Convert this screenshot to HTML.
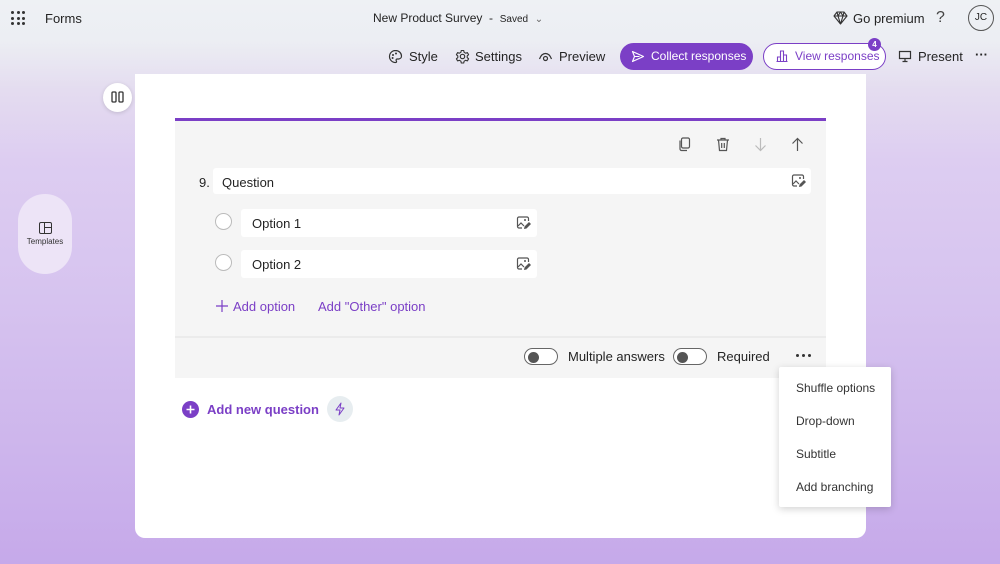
<!DOCTYPE html>
<html><head><style>
*{box-sizing:border-box;margin:0;padding:0}
body{width:1000px;height:564px;overflow:hidden;font-family:"Liberation Sans",sans-serif;color:#242424;position:relative;
background:linear-gradient(180deg,#eef1f4 0px,#eceef3 40px,#e4dcf0 90px,#ddcdf1 160px,#d6c3ef 300px,#cdb5ec 450px,#c6a9ea 564px);}
.a{position:absolute}
.t{font-size:13px}
svg{display:block}
</style></head><body>
<div class="a" style="left:11px;top:11px;width:14px;height:14px;display:grid;grid-template-columns:repeat(3,3px);gap:2.5px">
<i style="width:3px;height:3px;background:#333;border-radius:50%"></i><i style="width:3px;height:3px;background:#333;border-radius:50%"></i><i style="width:3px;height:3px;background:#333;border-radius:50%"></i><i style="width:3px;height:3px;background:#333;border-radius:50%"></i><i style="width:3px;height:3px;background:#333;border-radius:50%"></i><i style="width:3px;height:3px;background:#333;border-radius:50%"></i><i style="width:3px;height:3px;background:#333;border-radius:50%"></i><i style="width:3px;height:3px;background:#333;border-radius:50%"></i><i style="width:3px;height:3px;background:#333;border-radius:50%"></i></div>
<div class="a t" style="left:45px;top:11px">Forms</div>
<div class="a" style="left:373px;top:11px;font-size:12px">New Product Survey &nbsp;- &nbsp;<span style="font-size:10px">Saved</span> &nbsp;<span style="font-size:10px;color:#666">&#8964;</span></div>
<svg class="a" style="left:833px;top:11px" width="15" height="14" viewBox="0 0 15 14"><path d="M4 1h7l3 4-6.5 8L1 5z M1 5h13 M5 5l2.5 8 2.5-8 M4 1l1 4 2.5-4 2.5 4 1-4" fill="none" stroke="#333" stroke-width="1.1" stroke-linejoin="round"/></svg>
<div class="a t" style="left:853px;top:11px">Go premium</div>
<div class="a" style="left:936px;top:9px;font-size:16px;color:#444">?</div>
<div class="a" style="left:968px;top:5px;width:26px;height:26px;border:1px solid #555;border-radius:50%;font-size:10px;text-align:center;line-height:24px">JC</div>
<!-- toolbar -->
<svg class="a" style="left:388px;top:49px" width="15" height="15" viewBox="0 0 15 15"><path d="M7.5 1.5a6 6 0 1 0 0 12c1.2 0 1.3-1 .8-1.7-.6-.8-.2-1.8.9-1.8h1.6a3 3 0 0 0 2.7-3C13.5 4 10.8 1.5 7.5 1.5z" fill="none" stroke="#333" stroke-width="1.2"/><circle cx="5" cy="6" r="1" fill="#333"/><circle cx="8" cy="4.5" r="1" fill="#333"/><circle cx="4.6" cy="9" r="1" fill="#333"/></svg>
<div class="a t" style="left:409px;top:49px">Style</div>
<svg class="a" style="left:455px;top:49px" width="15" height="15" viewBox="0 0 15 15"><circle cx="7.5" cy="7.5" r="2.2" fill="none" stroke="#333" stroke-width="1.2"/><path d="M6.3 1.5h2.4l.4 1.8 1.5.9 1.8-.6 1.2 2.1-1.4 1.2v1.7l1.4 1.2-1.2 2.1-1.8-.6-1.5.9-.4 1.8H6.3l-.4-1.8-1.5-.9-1.8.6-1.2-2.1 1.4-1.2V6.9L1.4 5.7l1.2-2.1 1.8.6 1.5-.9z" fill="none" stroke="#333" stroke-width="1.1" stroke-linejoin="round"/></svg>
<div class="a t" style="left:475px;top:49px">Settings</div>
<svg class="a" style="left:538px;top:51px" width="15" height="11" viewBox="0 0 15 11"><path d="M1.5 8C3 4 5 2.5 7.5 2.5S12 4 13.5 8" fill="none" stroke="#333" stroke-width="1.2"/><circle cx="7.5" cy="7.5" r="2" fill="none" stroke="#333" stroke-width="1.2"/></svg>
<div class="a t" style="left:559px;top:49px">Preview</div>
<div class="a" style="left:620px;top:43px;width:133px;height:27px;background:#7b3fc6;border-radius:14px;color:#fff;font-size:12px;line-height:27px;padding-left:31px">Collect responses</div>
<svg class="a" style="left:631px;top:50px" width="14" height="13" viewBox="0 0 14 13"><path d="M1.5 1.5l11 5-11 5 2-5z M3.5 6.5h5" fill="none" stroke="#fff" stroke-width="1.1" stroke-linejoin="round"/></svg>
<div class="a" style="left:763px;top:43px;width:123px;height:27px;border:1px solid #7b3fc6;border-radius:14px;background:#fff;color:#7b3fc6;font-size:12px;line-height:25px;padding-left:31px">View responses</div>
<svg class="a" style="left:775px;top:49px" width="14" height="14" viewBox="0 0 14 14"><path d="M1.5 12.5h11 M2.5 12.5V8h3v4.5 M5.5 12.5V2h3v10.5 M8.5 12.5V6h3v6.5" fill="none" stroke="#7b3fc6" stroke-width="1.1"/></svg>
<div class="a" style="left:868px;top:38px;width:13px;height:13px;border-radius:50%;background:#7b3fc6;color:#fff;font-size:8px;text-align:center;line-height:13px;font-weight:bold">4</div>
<svg class="a" style="left:898px;top:50px" width="14" height="13" viewBox="0 0 14 13"><path d="M1.5 1.5h11v7h-11z M7 8.5v3 M4.5 11.5h5" fill="none" stroke="#333" stroke-width="1.2"/></svg>
<div class="a t" style="left:918px;top:49px">Present</div>
<div class="a" style="left:975px;top:47px;font-size:13px;font-weight:bold">&middot;&middot;&middot;</div>
<!-- card -->
<div class="a" style="left:135px;top:74px;width:731px;height:464px;background:#fff;border-radius:0 0 10px 10px"></div>
<div class="a" style="left:103px;top:83px;width:29px;height:29px;border-radius:50%;background:#fff;box-shadow:0 1px 4px rgba(0,0,0,.15)"></div>
<svg class="a" style="left:111px;top:91px" width="13" height="12" viewBox="0 0 13 12"><rect x="1" y="1" width="4" height="10" rx="1" fill="none" stroke="#333" stroke-width="1.3"/><rect x="8" y="1" width="4" height="10" rx="1" fill="none" stroke="#333" stroke-width="1.3"/></svg>
<div class="a" style="left:18px;top:194px;width:54px;height:80px;border-radius:27px;background:#ede4f7;text-align:center;padding-top:28px;font-size:8px;color:#333"><div style="width:13px;height:12px;border:1.4px solid #333;border-radius:2px;margin:0 auto 3px;position:relative"><i style="position:absolute;left:4px;top:0;bottom:0;border-left:1.4px solid #333"></i><i style="position:absolute;left:4px;right:0;top:4px;border-top:1.4px solid #333"></i></div>Templates</div>
<!-- question -->
<div class="a" style="left:175px;top:118px;width:651px;height:260px;background:#f5f5f5;border-top:3px solid #7b3fc6"></div>
<div class="a" style="left:175px;top:336px;width:651px;height:2px;background:#ebebeb"></div>
<svg class="a" style="left:678px;top:137px" width="14" height="15" viewBox="0 0 14 15"><rect x="3.5" y="1" width="8" height="10" rx="1.5" fill="none" stroke="#555" stroke-width="1.2"/><path d="M2 3.5v8.5a1.5 1.5 0 0 0 1.5 1.5H9" fill="none" stroke="#555" stroke-width="1.2"/></svg>
<svg class="a" style="left:716px;top:137px" width="14" height="15" viewBox="0 0 14 15"><path d="M1 3h12 M5 3V1.5h4V3 M2.5 3l1 10.5h7l1-10.5 M5.7 6v5 M8.3 6v5" fill="none" stroke="#555" stroke-width="1.2"/></svg>
<svg class="a" style="left:754px;top:137px" width="13" height="15" viewBox="0 0 13 15"><path d="M6.5 1v12 M1.5 8.5l5 5 5-5" fill="none" stroke="#bbb" stroke-width="1.2"/></svg>
<svg class="a" style="left:791px;top:137px" width="13" height="15" viewBox="0 0 13 15"><path d="M6.5 14V2 M1.5 6.5l5-5 5 5" fill="none" stroke="#555" stroke-width="1.2"/></svg>
<div class="a t" style="left:199px;top:175px">9.</div>
<div class="a" style="left:213px;top:168px;width:598px;height:26px;background:#fff;border-radius:3px"></div>
<div class="a t" style="left:222px;top:175px">Question</div>
<svg class="a" style="left:791px;top:173px" width="15" height="15" viewBox="0 0 15 15"><path d="M6 13H3a1.5 1.5 0 0 1-1.5-1.5v-8A1.5 1.5 0 0 1 3 2h8a1.5 1.5 0 0 1 1.5 1.5V6 M2 11l3-3 3 3" fill="none" stroke="#555" stroke-width="1.2"/><circle cx="9" cy="5" r="1" fill="#555"/><path d="M8 14l.5-2.5 4.5-4.5 2 2-4.5 4.5z" fill="#555"/></svg>
<div class="a" style="left:215px;top:213px;width:17px;height:17px;border:1px solid #bbb;border-radius:50%;background:#fff"></div>
<div class="a" style="left:241px;top:209px;width:296px;height:28px;background:#fff;border-radius:3px"></div>
<div class="a t" style="left:252px;top:216px">Option 1</div>
<svg class="a" style="left:516px;top:215px" width="15" height="15" viewBox="0 0 15 15"><path d="M6 13H3a1.5 1.5 0 0 1-1.5-1.5v-8A1.5 1.5 0 0 1 3 2h8a1.5 1.5 0 0 1 1.5 1.5V6 M2 11l3-3 3 3" fill="none" stroke="#555" stroke-width="1.2"/><circle cx="9" cy="5" r="1" fill="#555"/><path d="M8 14l.5-2.5 4.5-4.5 2 2-4.5 4.5z" fill="#555"/></svg>
<div class="a" style="left:215px;top:254px;width:17px;height:17px;border:1px solid #bbb;border-radius:50%;background:#fff"></div>
<div class="a" style="left:241px;top:250px;width:296px;height:28px;background:#fff;border-radius:3px"></div>
<div class="a t" style="left:252px;top:257px">Option 2</div>
<svg class="a" style="left:516px;top:256px" width="15" height="15" viewBox="0 0 15 15"><path d="M6 13H3a1.5 1.5 0 0 1-1.5-1.5v-8A1.5 1.5 0 0 1 3 2h8a1.5 1.5 0 0 1 1.5 1.5V6 M2 11l3-3 3 3" fill="none" stroke="#555" stroke-width="1.2"/><circle cx="9" cy="5" r="1" fill="#555"/><path d="M8 14l.5-2.5 4.5-4.5 2 2-4.5 4.5z" fill="#555"/></svg>
<svg class="a" style="left:215px;top:299px" width="14" height="14" viewBox="0 0 14 14"><path d="M7 1v12 M1 7h12" stroke="#7b3fc6" stroke-width="1.2"/></svg>
<div class="a t" style="left:233px;top:299px;color:#7b3fc6">Add option</div>
<div class="a t" style="left:318px;top:299px;color:#7b3fc6">Add "Other" option</div>
<!-- toggles -->
<div class="a" style="left:524px;top:348px;width:34px;height:17px;border:1px solid #666;border-radius:9px;background:#fff"><i style="position:absolute;left:3px;top:2.5px;width:11px;height:11px;border-radius:50%;background:#555"></i></div>
<div class="a t" style="left:568px;top:349px">Multiple answers</div>
<div class="a" style="left:673px;top:348px;width:34px;height:17px;border:1px solid #666;border-radius:9px;background:#fff"><i style="position:absolute;left:3px;top:2.5px;width:11px;height:11px;border-radius:50%;background:#555"></i></div>
<div class="a t" style="left:717px;top:349px">Required</div>
<div class="a" style="left:796px;top:354px;display:flex;gap:3px"><i style="width:3px;height:3px;border-radius:50%;background:#333"></i><i style="width:3px;height:3px;border-radius:50%;background:#333"></i><i style="width:3px;height:3px;border-radius:50%;background:#333"></i></div>
<!-- menu -->
<div class="a" style="left:779px;top:367px;width:112px;height:140px;background:#fff;box-shadow:0 2px 8px rgba(0,0,0,.18);border-radius:2px;font-size:12px;color:#333">
<div class="a" style="left:17px;top:14px;white-space:nowrap">Shuffle options</div>
<div class="a" style="left:17px;top:47px">Drop-down</div>
<div class="a" style="left:17px;top:80px">Subtitle</div>
<div class="a" style="left:17px;top:113px;white-space:nowrap">Add branching</div>
</div>
<!-- add new -->
<div class="a" style="left:182px;top:401px;width:17px;height:17px;border-radius:50%;background:#7b3fc6"></div>
<svg class="a" style="left:182px;top:401px" width="17" height="17" viewBox="0 0 17 17"><path d="M8.5 4.5v8 M4.5 8.5h8" stroke="#fff" stroke-width="1.6"/></svg>
<div class="a t" style="left:207px;top:402px;color:#7b3fc6;font-weight:bold">Add new question</div>
<div class="a" style="left:327px;top:396px;width:26px;height:26px;border-radius:50%;background:#e7edf0"></div>
<svg class="a" style="left:334px;top:402px" width="12" height="14" viewBox="0 0 12 14"><path d="M7 1L2 8h4l-1 5 5-7H6z" fill="none" stroke="#7b3fc6" stroke-width="1" stroke-linejoin="round"/></svg>
</body></html>
